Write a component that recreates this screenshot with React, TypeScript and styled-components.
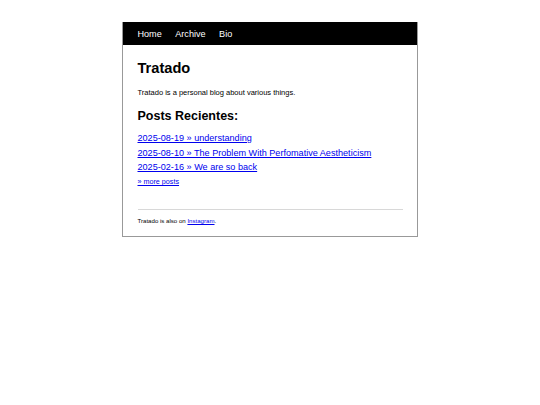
import { Component, ReactNode } from "react";
import styled, { createGlobalStyle } from "styled-components";

const GlobalStyle = createGlobalStyle`
  html, body {
    margin: 0;
    padding: 0;
    background: #ffffff;
  }
  body {
    font-family: "Liberation Sans", Arial, sans-serif;
    color: #000000;
  }
`;

const Page = styled.div`
  width: 540px;
  height: 405px;
  padding-top: 22px;
  box-sizing: border-box;
`;

const Card = styled.div`
  width: 296px;
  margin: 0 0 0 122px;
  border: 1px solid #999999;
  border-top: none;
  box-sizing: border-box;
`;

const NavBar = styled.nav`
  display: flex;
  align-items: center;
  gap: 13.5px;
  height: 23px;
  padding: 0 14.5px;
  background: #000000;
`;

const NavLink = styled.a`
  color: #ffffff;
  font-size: 9.1px;
  text-decoration: none;
`;

const Body = styled.div`
  padding: 14px 14.5px 11px 14.5px;
`;

const Title = styled.h1`
  margin: 0;
  font-size: 14.6px;
  font-weight: bold;
  line-height: 18px;
`;

const Intro = styled.p`
  margin: 11px 0 0 0;
  font-size: 7.5px;
  line-height: 10px;
`;

const SectionTitle = styled.h2`
  margin: 11px 0 0 0;
  font-size: 12.5px;
  font-weight: bold;
  line-height: 14px;
`;

const PostList = styled.ul`
  list-style: none;
  margin: 8px 0 0 0;
  padding: 0;
  display: flex;
  flex-direction: column;
`;

const PostLink = styled.a<{ $small?: boolean }>`
  display: block;
  color: #0000ee;
  text-decoration: underline;
  font-size: ${(p) => (p.$small ? "7.2px" : "9.1px")};
  line-height: ${(p) => (p.$small ? "13px" : "14.7px")};
`;

const Rule = styled.hr`
  margin: 21px 0 0 0;
  border: none;
  border-top: 1px solid #d8d8d8;
`;

const Footer = styled.p`
  margin: 7px 0 0 0;
  font-size: 6.1px;
  line-height: 8px;
`;

const FooterLink = styled.a`
  color: #0000ee;
  text-decoration: underline;
`;

const posts = [
  "2025-08-19 » understanding",
  "2025-08-10 » The Problem With Perfomative Aestheticism",
  "2025-02-16 » We are so back",
];

export default class App extends Component {
  render(): ReactNode {
    return (
      <Page>
        <GlobalStyle />
        <Card>
          <NavBar>
            <NavLink href="#">Home</NavLink>
            <NavLink href="#">Archive</NavLink>
            <NavLink href="#">Bio</NavLink>
          </NavBar>
          <Body>
            <Title>Tratado</Title>
            <Intro>Tratado is a personal blog about various things.</Intro>
            <SectionTitle>Posts Recientes:</SectionTitle>
            <PostList>
              {posts.map((p) => (
                <li key={p}>
                  <PostLink href="#">{p}</PostLink>
                </li>
              ))}
              <li>
                <PostLink href="#" $small>
                  » more posts
                </PostLink>
              </li>
            </PostList>
            <Rule />
            <Footer>
              Tratado is also on <FooterLink href="#">Instagram</FooterLink>.
            </Footer>
          </Body>
        </Card>
      </Page>
    );
  }
}
